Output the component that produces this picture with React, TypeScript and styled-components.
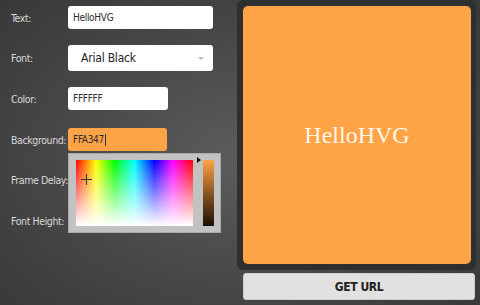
import React from 'react';
import styled, { createGlobalStyle } from 'styled-components';

const GlobalStyle = createGlobalStyle`
  html, body {
    margin: 0;
    padding: 0;
    width: 480px;
    height: 305px;
    overflow: hidden;
  }
  body {
    font-family: 'DejaVu Sans Condensed', 'Liberation Sans', sans-serif;
  }
`;

const Page = styled.div`
  width: 480px;
  height: 305px;
  display: grid;
  grid-template-columns: 237px 243px;
  background: radial-gradient(ellipse 70% 75% at 50% 52%, #5c5c5c 0%, #474747 55%, #383838 100%);
  box-sizing: border-box;
`;

const Form = styled.div`
  display: flex;
  flex-direction: column;
  gap: 5.7px;
  padding-left: 11px;
`;

const Row = styled.div`
  position: relative;
  height: 35px;
  display: flex;
  align-items: center;
`;

const Label = styled.label`
  flex: 0 0 57px;
  white-space: nowrap;
  color: #d9d9d9;
  font-size: 10.5px;
  letter-spacing: -0.4px;
`;

const Field = styled.div<{ $w: number; $h?: number; $bg?: string }>`
  width: ${p => p.$w}px;
  height: ${p => p.$h || 23}px;
  background: ${p => p.$bg || '#ffffff'};
  border-radius: 3px;
  box-sizing: border-box;
  display: flex;
  align-items: center;
  padding-left: 5px;
  font-size: 10px;
  letter-spacing: -0.3px;
  color: #2b2b2b;
`;

const Caret = styled.span`
  display: inline-block;
  width: 1px;
  height: 12px;
  background: #333;
  margin-left: 1px;
`;

const Select = styled(Field)`
  padding-left: 13px;
  padding-right: 9px;
  justify-content: space-between;
  font-size: 12px;
  letter-spacing: -0.2px;
  color: #222;
`;

const SelectArrow = styled.span`
  width: 0;
  height: 0;
  border-left: 3px solid transparent;
  border-right: 3px solid transparent;
  border-top: 3px solid #bbb;
`;

const Picker = styled.div`
  position: absolute;
  left: 57px;
  top: 31px;
  width: 153px;
  height: 80px;
  background: #c2c2c2;
  border: 1px solid #a9a9a9;
  box-sizing: border-box;
  display: flex;
  padding: 6px 0 0 7px;
  gap: 10px;
  z-index: 2;
`;

const Spectrum = styled.div`
  position: relative;
  width: 117px;
  height: 66px;
  background:
    linear-gradient(to bottom, rgba(255, 255, 255, 0) 0%, rgba(255, 255, 255, 0.55) 55%, #ffffff 100%),
    linear-gradient(to right, #ff0000 0%, #ffff00 17%, #00ff00 33%, #00ffff 50%, #0000ff 67%, #ff00ff 83%, #ff0000 100%);
`;

const Crosshair = styled.svg`
  position: absolute;
  left: 5px;
  top: 14px;
`;

const Bar = styled.div`
  position: relative;
  width: 11px;
  height: 66px;
  background: linear-gradient(to bottom, #ffa347 0%, #8a5523 50%, #1a1006 100%);
`;

const BarArrow = styled.span`
  position: absolute;
  left: -6px;
  top: -3px;
  width: 0;
  height: 0;
  border-top: 3px solid transparent;
  border-bottom: 3px solid transparent;
  border-left: 4px solid #111;
`;

const Side = styled.div`
  display: flex;
  flex-direction: column;
  gap: 3px;
  padding-right: 4px;
`;

const Frame = styled.div`
  background: #2e2f30;
  border-radius: 6px;
  padding: 6px 5px 6px 6px;
  height: 270px;
  box-sizing: border-box;
`;

const Preview = styled.div`
  height: 100%;
  background: #ffa347;
  border-radius: 5px;
  display: flex;
  align-items: center;
  justify-content: center;
  color: #fff6e8;
  font-family: 'Liberation Serif', 'Times New Roman', serif;
  font-size: 24px;
  padding-top: 1px;
  box-sizing: border-box;
`;

const Button = styled.button`
  margin-left: 6px;
  width: 232px;
  height: 27px;
  background: #e1e1e1;
  border: 1px solid #cfcfcf;
  border-radius: 3px;
  font-family: 'DejaVu Sans Condensed', sans-serif;
  font-weight: bold;
  font-size: 12px;
  letter-spacing: -0.4px;
  color: #222;
  padding: 0;
`;

const App = () => {
  return (
    <>
      <GlobalStyle />
      <Page>
        <Form>
          <Row>
            <Label>Text:</Label>
            <Field $w={145}>HelloHVG</Field>
          </Row>
          <Row>
            <Label>Font:</Label>
            <Select $w={145} $h={26}>
              Arial Black
              <SelectArrow />
            </Select>
          </Row>
          <Row>
            <Label>Color:</Label>
            <Field $w={100}>FFFFFF</Field>
          </Row>
          <Row>
            <Label>Background:</Label>
            <Field $w={99} $bg="#ffa347">
              FFA347
              <Caret />
            </Field>
            <Picker>
              <Spectrum>
                <Crosshair width="11" height="11" viewBox="0 0 11 11">
                  <path d="M5.5 0v11M0 5.5h11" stroke="#333" strokeWidth="1" />
                </Crosshair>
              </Spectrum>
              <Bar>
                <BarArrow />
              </Bar>
            </Picker>
          </Row>
          <Row>
            <Label>Frame Delay:</Label>
            <Field $w={100}>100</Field>
          </Row>
          <Row>
            <Label>Font Height:</Label>
            <Field $w={100}>24</Field>
          </Row>
        </Form>
        <Side>
          <Frame>
            <Preview>HelloHVG</Preview>
          </Frame>
          <Button>GET URL</Button>
        </Side>
      </Page>
    </>
  );
};

export default App;
